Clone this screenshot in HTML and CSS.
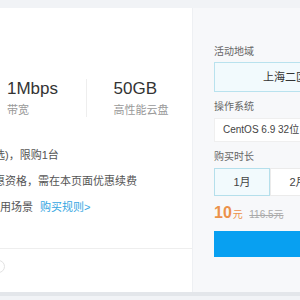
FILE: index.html
```html
<!DOCTYPE html>
<html>
<head>
  <title>轻量应用服务器</title>
  <link rel="stylesheet" href="styles.css">
</head>
<body>
  <div class="page">
    <div class="main">
      <div class="stats">
        <div class="stat">
          <div class="stat-value">1Mbps</div>
          <div class="stat-label">带宽</div>
        </div>
        <div class="stat">
          <div class="stat-value">50GB</div>
          <div class="stat-label">高性能云盘</div>
        </div>
      </div>

      <div class="notes">
        <p class="cut">选)，限购1台</p>
        <p class="cut">惠资格，需在本页面优惠续费</p>
        <p>用场景<a class="rule-link" href="#">购买规则&gt;</a></p>
      </div>

      <div class="main-foot">
        <span class="ring"></span>
      </div>
    </div>

    <div class="side">
      <div class="field-label">活动地域</div>
      <div class="region-box">上海二区</div>

      <div class="field-label">操作系统</div>
      <div class="os-box">CentOS 6.9 32位</div>

      <div class="field-label">购买时长</div>
      <div class="durations">
        <div class="dur active">1月</div>
        <div class="dur">2月</div>
      </div>

      <div class="price">
        <span class="price-now">10</span><span class="price-unit">元</span>
        <span class="price-old">116.5元</span>
      </div>

      <button class="buy-btn"></button>
    </div>
  </div>
  <div class="bottom-bar"></div>
</body>
</html>
```

FILE: styles.css
```css
body {
  margin: 0;
  background: #f1f3f6;
  font-family: "Liberation Sans", "Noto Sans CJK SC", sans-serif;
  color: #333;
  overflow: hidden;
}

.page {
  display: flex;
  height: 284px;
  margin-top: 8px;
}

/* left card */
.main {
  width: 192px;
  background: #fff;
  overflow: hidden;
  display: flex;
  flex-direction: column;
}

.stats {
  display: flex;
  padding: 71px 0 0 7px;
}

.stat {
  width: 85px;
}

.stat + .stat {
  border-left: 1px solid #eeeeee;
  padding-left: 27px;
}

.stat-value {
  font-size: 17px;
  line-height: 20px;
  color: #333;
}

.stat-label {
  margin-top: 4px;
  font-size: 11px;
  line-height: 14px;
  color: #999;
}

.notes {
  margin-top: 25px;
  font-size: 11px;
  color: #555;
}

.notes p {
  margin: 0;
  line-height: 26px;
  white-space: nowrap;
}

.notes .cut {
  text-indent: -6px;
}

.rule-link {
  margin-left: 7px;
  color: #35a6e2;
  text-decoration: none;
}

.main-foot {
  margin-top: 28px;
  flex: 1;
  border-top: 1px solid #eeeeee;
  padding-top: 11px;
}

.ring {
  display: block;
  width: 11px;
  height: 11px;
  margin-left: -8px;
  border: 1px solid #e2e2e2;
  border-radius: 50%;
}

/* right panel */
.side {
  flex: 1;
  background: #f7f8fa;
  border-left: 1px solid #eef0f3;
  padding: 37px 0 0 21px;
  overflow: hidden;
}

.field-label {
  font-size: 10px;
  line-height: 14px;
  color: #666;
  margin-top: 8px;
}

.field-label:first-child {
  margin-top: 0;
}

.region-box {
  box-sizing: border-box;
  width: 142px;
  height: 30px;
  margin-top: 3px;
  border: 1px solid #b9e2ee;
  background: #f2fafd;
  font-size: 11px;
  line-height: 28px;
  text-align: center;
  color: #333;
}

.os-box {
  box-sizing: border-box;
  width: 142px;
  height: 24px;
  margin-top: 4px;
  border: 1px solid #efefef;
  background: #fff;
  padding-left: 8px;
  font-size: 10px;
  line-height: 22px;
  color: #444;
}

.durations {
  display: flex;
  margin-top: 4px;
}

.dur {
  box-sizing: border-box;
  width: 56px;
  height: 28px;
  flex: none;
  border: 1px solid #ebebeb;
  background: #fff;
  font-size: 11px;
  line-height: 26px;
  text-align: center;
  color: #444;
}

.dur.active {
  border-color: #b5dfeb;
  background: #f2fafd;
}

.price {
  margin-top: 7px;
  height: 20px;
  line-height: 20px;
  white-space: nowrap;
}

.price-now {
  font-size: 16px;
  font-weight: bold;
  color: #ec914a;
}

.price-unit {
  font-size: 10px;
  color: #ec914a;
  margin-left: 1px;
}

.price-old {
  font-size: 10px;
  color: #aaa;
  text-decoration: line-through;
  margin-left: 2px;
}

.buy-btn {
  display: block;
  width: 142px;
  height: 26px;
  margin-top: 8px;
  border: none;
  background: #08a0f1;
  cursor: pointer;
}

.bottom-bar {
  height: 4px;
  background: #e3e6ea;
}
```
